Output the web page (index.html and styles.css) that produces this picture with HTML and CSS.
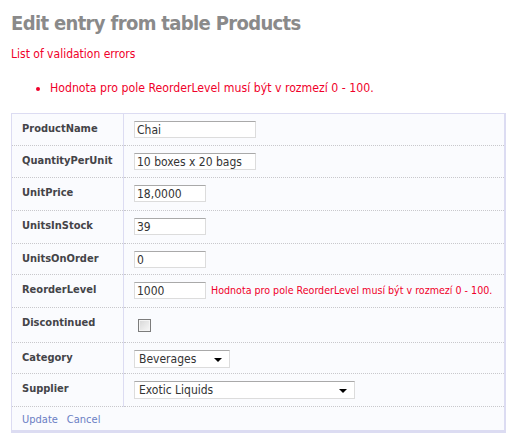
FILE: index.html
```html
<!DOCTYPE html>
<html>
<head>
<meta charset="utf-8">
<link rel="stylesheet" href="styles.css">
</head>
<body>
<div class="page">
  <h1 class="title">Edit entry from table Products</h1>
  <div class="val-summary">
    <div class="val-head">List of validation errors</div>
    <ul class="val-list">
      <li>Hodnota pro pole ReorderLevel musí být v rozmezí 0 - 100.</li>
    </ul>
  </div>
  <table class="form">
    <tr class="h32">
      <td class="label">ProductName</td>
      <td class="field"><input class="inp w-long" type="text" value="Chai"></td>
    </tr>
    <tr class="h32">
      <td class="label">QuantityPerUnit</td>
      <td class="field"><input class="inp w-long" type="text" value="10 boxes x 20 bags"></td>
    </tr>
    <tr class="h33">
      <td class="label">UnitPrice</td>
      <td class="field"><input class="inp w-short" type="text" value="18,0000"></td>
    </tr>
    <tr class="h33">
      <td class="label">UnitsInStock</td>
      <td class="field"><input class="inp w-short" type="text" value="39"></td>
    </tr>
    <tr class="h31">
      <td class="label">UnitsOnOrder</td>
      <td class="field"><input class="inp w-short" type="text" value="0"></td>
    </tr>
    <tr class="h33">
      <td class="label">ReorderLevel</td>
      <td class="field"><input class="inp w-short" type="text" value="1000"><span class="field-err">Hodnota pro pole ReorderLevel musí být v rozmezí 0 - 100.</span></td>
    </tr>
    <tr class="h35">
      <td class="label">Discontinued</td>
      <td class="field"><input class="chk" type="checkbox"></td>
    </tr>
    <tr class="h31">
      <td class="label">Category</td>
      <td class="field"><span class="sel w-cat"><span class="sel-text">Beverages</span><span class="sel-arrow"></span></span></td>
    </tr>
    <tr class="h33">
      <td class="label">Supplier</td>
      <td class="field"><span class="sel w-sup"><span class="sel-text">Exotic Liquids</span><span class="sel-arrow"></span></span></td>
    </tr>
    <tr class="row-actions">
      <td colspan="2"><a class="act" href="#">Update</a><a class="act" href="#">Cancel</a></td>
    </tr>
  </table>
</div>
</body>
</html>
```
FILE: styles.css
```css
html, body {
  margin: 0;
  padding: 0;
  background: #ffffff;
}
.page {
  padding: 11px 0 0 11px;
  font-family: "DejaVu Sans Condensed", "DejaVu Sans", sans-serif;
}
.title {
  margin: 0;
  font-family: "DejaVu Sans Condensed", "DejaVu Sans", sans-serif;
  font-weight: bold;
  font-size: 20px;
  letter-spacing: -0.65px;
  line-height: 24px;
  color: #8a8a8a;
}
.val-summary {
  color: #f0002a;
  font-size: 12px;
}
.val-head {
  margin-top: 11px;
  line-height: 16px;
}
.val-list {
  margin: 18px 0 17px 0;
  padding-left: 39px;
  font-size: 12.2px;
  line-height: 16px;
}
.val-list li {
  list-style: disc;
}
.form {
  border-collapse: collapse;
  width: 495px;
  background: #fafbfe;
  border: 1px solid #dcdcf2;
  border-right-width: 2px;
  border-bottom-width: 3px;
  font-size: 11px;
}
.form td {
  border-bottom: 1px dotted #c8c8cc;
  vertical-align: top;
  padding: 0;
  box-sizing: border-box;
}
.form .h31 td { height: 31px; }
.form .h32 td { height: 32px; }
.form .h33 td { height: 33px; }
.form .h35 td { height: 35px; }
.label {
  width: 112px;
  border-right: 1px solid #dcdcf2;
  padding: 8px 0 0 10px !important;
  font-weight: bold;
  font-size: 11px;
  color: #444448;
}
.field {
  padding: 7px 0 0 10px !important;
  white-space: nowrap;
}
.inp {
  box-sizing: border-box;
  height: 17px;
  margin: 0;
  padding: 0 2px;
  border: 1px solid #dcdcdc;
  border-top-color: #a9a9a9;
  background: #fff;
  font-family: "DejaVu Sans Condensed", "DejaVu Sans", sans-serif;
  font-size: 12px;
  color: #333;
  vertical-align: top;
}
.w-long { width: 122px; }
.w-short { width: 72px; }
.field-err {
  display: inline-block;
  margin-left: 5px;
  padding-top: 2px;
  color: #f0002a;
  font-size: 10.6px;
  vertical-align: top;
}
.chk {
  appearance: none;
  -webkit-appearance: none;
  box-sizing: border-box;
  width: 13px;
  height: 13px;
  margin: 4px 0 0 4px;
  border: 1px solid #7c7c7c;
  box-shadow: inset 0 0 0 1px #f4f4f4;
  background: linear-gradient(135deg, #d6d6d6, #f8f8f8);
}
.sel {
  position: relative;
  display: inline-block;
  box-sizing: border-box;
  height: 18px;
  border: 1px solid #dcdcdc;
  border-top-color: #a9a9a9;
  background: #fff;
  font-size: 12px;
  line-height: 16px;
  color: #333;
  vertical-align: top;
}
.w-cat { width: 96px; }
.w-sup { width: 221px; }
.sel-text {
  padding-left: 4px;
}
.sel-arrow {
  position: absolute;
  right: 7px;
  top: 7px;
  width: 0;
  height: 0;
  border-left: 4px solid transparent;
  border-right: 4px solid transparent;
  border-top: 4px solid #000;
}
.form .row-actions td {
  height: 25px;
  padding: 6px 0 0 10px;
  border-bottom: none;
}
.act {
  color: #6a7ec4;
  text-decoration: none;
  font-size: 11px;
  margin-right: 9px;
}
```
